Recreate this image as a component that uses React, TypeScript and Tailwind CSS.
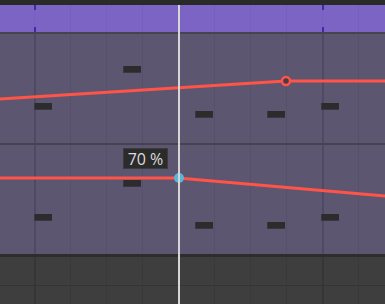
import React from "react";

const beats = [34, 70, 106, 142, 178, 214, 250, 286, 322, 358];
const bars = [34, 322];

type Note = [number, number];

function Lane({
  notes,
  points,
  dot,
}: {
  notes: Note[];
  points: string;
  dot: React.ReactNode;
}) {
  return (
    <div className="h-[109px] bg-[#5c5671]">
      <svg width="385" height="109" viewBox="0 0 385 109" className="block">
        {beats.map((x) => (
          <rect
            key={x}
            x={x}
            y={0}
            width={bars.includes(x) ? 2 : 1}
            height={109}
            fill={bars.includes(x) ? "#4f4964" : "#56506b"}
          />
        ))}
        {notes.map(([x, y], i) => (
          <g key={i}>
            <rect x={x - 1} y={y} width={18} height={7} fill="#3a3744" />
            <rect x={x} y={y} width={17} height={6} fill="#2c2c2c" />
          </g>
        ))}
        <polyline
          points={points}
          fill="none"
          stroke="#ff5447"
          strokeWidth={3}
          strokeLinejoin="round"
        />
        {dot}
      </svg>
    </div>
  );
}

export default function App() {
  const notes: Note[] = [
    [124, 32],
    [35, 69],
    [196, 77],
    [268, 77],
    [322, 69],
  ];
  const notes2: Note[] = [
    [124, 35],
    [35, 69],
    [196, 77],
    [268, 77],
    [322, 69],
  ];
  return (
    <div
      className="relative w-[385px] h-[304px] overflow-hidden flex flex-col bg-[#2b2b2b]"
      style={{ fontFamily: '"Liberation Sans", Arial, sans-serif' }}
    >
      <div className="h-[5px] bg-[#2a2a2a]" />
      <div className="h-[27px] bg-[#7b64c4]">
        <svg width="385" height="27" viewBox="0 0 385 27" className="block">
          {beats.map((x) => (
            <rect key={x} x={x} y={0} width={1} height={27} fill="#7660bd" />
          ))}
          {bars.map((x) => (
            <g key={x}>
              <rect x={x} y={0} width={2} height={5} fill="#3b2f9c" />
              <rect x={x} y={22} width={2} height={5} fill="#3b2f9c" />
            </g>
          ))}
        </svg>
      </div>
      <div className="h-[2px] bg-[#48444f]" />
      <Lane
        notes={notes}
        points="0,65 286,47 385,47"
        dot={
          <circle cx={286} cy={47} r={4} fill="#4b3a47" stroke="#ff5447" strokeWidth={2.5} />
        }
      />
      <div className="h-[2px] bg-[#47424f]" />
      <Lane
        notes={notes2}
        points="0,33 178,33 385,51"
        dot={<circle cx={179} cy={33} r={5} fill="#5bb5da" />}
      />
      <div className="h-[3px] bg-[#2d2d2d]" />
      <div className="h-[47px] bg-[#3e3e3e]">
        <svg width="385" height="47" viewBox="0 0 385 47" className="block">
          {beats.map((x) => (
            <rect
              key={x}
              x={x}
              y={0}
              width={bars.includes(x) ? 2 : 1}
              height={47}
              fill={bars.includes(x) ? "#363636" : "#393939"}
            />
          ))}
          <rect x={0} y={28} width={385} height={1} fill="#343434" />
        </svg>
      </div>

      {/* playhead */}
      <div className="absolute left-[178px] top-[5px] w-[2px] h-[299px] bg-[#d6d6d6]" />

      {/* tooltip */}
      <div
        className="absolute left-[123px] top-[148px] w-[45px] h-[21px] bg-[#2b2b2b] border border-[#3c3c3c] flex items-center justify-center text-[16px] leading-none text-[#dcdcdc]"
        style={{ fontFamily: '"Open Sans", "Liberation Sans", sans-serif' }}
      >
        70 %
      </div>
    </div>
  );
}
